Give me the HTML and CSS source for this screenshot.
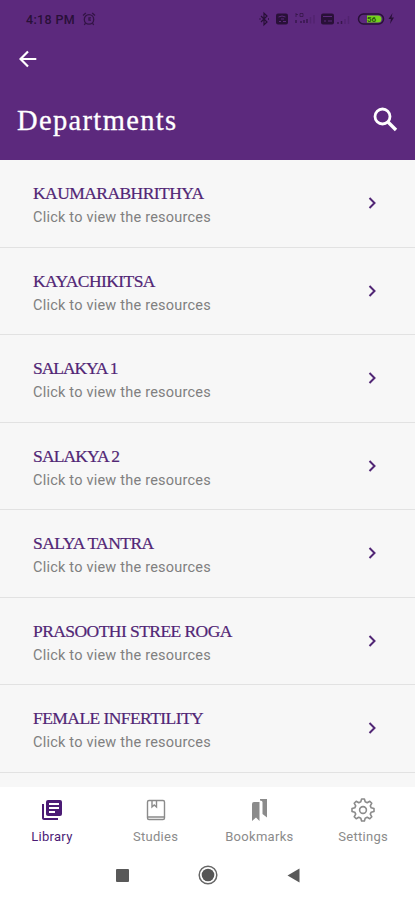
FILE: index.html
```html
<!DOCTYPE html>
<html lang="en">
<head>
<meta charset="utf-8">
<title>Departments</title>
<link rel="stylesheet" href="styles.css">
</head>
<body>
<header class="header">
  <div class="status">
    <span class="time">4:18 PM</span>
    <svg class="alarm" width="14" height="14" viewBox="0 0 14 14" fill="none" stroke="currentColor" stroke-width="1.3"><circle cx="7" cy="7.4" r="4.7"/><path d="M1 3.5 3.8 1M13 3.5 10.2 1M3.5 11.2 2.3 13M10.5 11.2 11.7 13M9 5.8H7v2.3h2"/></svg>
    <svg class="signals" width="136" height="16" viewBox="0 0 136 16" fill="none" stroke="currentColor">
      <path d="m2 5 6 6-3 2.8V2.2L8 5l-6 6" stroke-width="1.2"/><path d="M.5 8h1M9 8h1" stroke-width="1.4"/>
      <rect x="17" y="2.5" width="12" height="11" rx="2" fill="currentColor" stroke="none"/>
      <path d="M19.500 6q3.500-2 7 0M20 10.500h2M24 10.500h3M22 8h3" stroke="#5c297d" stroke-width="1"/>
      <path d="M37 2v4M37 3.500h2M41 2.500h3v3h-3z" stroke-width="1" opacity=".6"/><path d="M37 9v3M42 12v-2M45 12V9M48 12V8" stroke-width="1.500" opacity=".7"/>
      <path d="M51.500 12.500V6M55 12.500V4" stroke-width="1.500" opacity=".2"/>
      <rect x="62" y="2.500" width="13" height="11" rx="2" fill="currentColor" stroke="none"/>
      <path d="M64 5.500h9M65 10h2M69 10h4" stroke="#5c297d" stroke-width="1"/>
      <path d="M79 13v-2M82.500 13v-3" stroke-width="1.500" opacity=".7"/><path d="M86 13V8M89.500 13V5" stroke-width="1.500" opacity=".2"/>
      <rect x="99.500" y="3" width="25" height="10" rx="5" stroke-width="1.500"/>
      <path d="M108 4.500h11a3.500 3.500 0 0 1 0 7h-11z" fill="#75d31c" stroke="none"/>
      <text class="charge" x="108" y="11">56</text>
      <path d="m133.500 2-4 6h2.500l-1 5 4-6.500h-2.500z" fill="currentColor" stroke="none"/>
    </svg>
  </div>
  <div class="back"><svg width="18" height="18" viewBox="0 0 18 18" fill="none" stroke="#fff" stroke-width="2.200"><path d="M17.300 9H2M9 1.500 1.500 9 9 16.500"/></svg></div>
  <div class="heading">
    <h1>Departments</h1>
    <svg width="25" height="25" viewBox="0 0 25 25" fill="none" stroke="#fff" stroke-width="2.800"><circle cx="9.500" cy="9.500" r="7.500"/><path d="m15 15 8 8" stroke-width="3.400"/></svg>
  </div>
</header>
<main class="list">
  <div class="row"><div class="label"><h2>KAUMARABHRITHYA</h2><p>Click to view the resources</p></div><svg class="chev" viewBox="0 0 9 12"><path d="m1.500 1 5 5-5 5"/></svg></div>
  <div class="row"><div class="label"><h2>KAYACHIKITSA</h2><p>Click to view the resources</p></div><svg class="chev" viewBox="0 0 9 12"><path d="m1.500 1 5 5-5 5"/></svg></div>
  <div class="row"><div class="label"><h2 class="tight">SALAKYA 1</h2><p>Click to view the resources</p></div><svg class="chev" viewBox="0 0 9 12"><path d="m1.500 1 5 5-5 5"/></svg></div>
  <div class="row"><div class="label"><h2 class="snug">SALAKYA 2</h2><p>Click to view the resources</p></div><svg class="chev" viewBox="0 0 9 12"><path d="m1.500 1 5 5-5 5"/></svg></div>
  <div class="row"><div class="label"><h2>SALYA TANTRA</h2><p>Click to view the resources</p></div><svg class="chev" viewBox="0 0 9 12"><path d="m1.500 1 5 5-5 5"/></svg></div>
  <div class="row"><div class="label"><h2>PRASOOTHI STREE ROGA</h2><p>Click to view the resources</p></div><svg class="chev" viewBox="0 0 9 12"><path d="m1.500 1 5 5-5 5"/></svg></div>
  <div class="row"><div class="label"><h2>FEMALE INFERTILITY</h2><p>Click to view the resources</p></div><svg class="chev" viewBox="0 0 9 12"><path d="m1.500 1 5 5-5 5"/></svg></div>
</main>
<nav class="tabs">
  <a class="tab active"><svg width="24" height="24" viewBox="0 0 24 24"><path fill="currentColor" d="M4 6H2v14c0 1.100.9 2 2 2h14v-2H4zm16-4H8a2 2 0 0 0-2 2v12c0 1.100.9 2 2 2h12a2 2 0 0 0 2-2V4a2 2 0 0 0-2-2m-1 9H9V9h10zm-4 4H9v-2h6zm4-8H9V5h10z"/></svg><span>Library</span></a>
  <a class="tab"><svg width="24" height="24" viewBox="0 0 24 24" fill="none" stroke="currentColor" stroke-width="1.400"><rect x="3.500" y="2.500" width="17" height="19" rx="1.500"/><path d="M3.500 19h17M8 2.500V9l2.200-2 2.300 2V2.500"/></svg><span>Studies</span></a>
  <a class="tab"><svg width="24" height="24" viewBox="0 0 24 24" fill="currentColor"><path d="M5 6q0-2 2-2h5.500v19L9 19.500 5 23zM13 1h7v18.500L15.500 16V4q0-1.500-2.500-1.500z"/></svg><span>Bookmarks</span></a>
  <a class="tab"><svg width="24" height="24" viewBox="0 0 24 24" fill="none" stroke="currentColor" stroke-width="1.600" stroke-linejoin="round"><path d="M9.800 3.800 10.600 1h2.800l.8 2.800 2 .9 2.600-1.500 2 2-1.500 2.600.9 2 2.800.8v2.800l-2.800.8-.9 2 1.500 2.600-2 2-2.600-1.500-2 .9-.8 2.800h-2.800l-.8-2.800-2-.9-2.600 1.500-2-2 1.500-2.600-.9-2L1 13.400v-2.800l2.800-.8.9-2-1.500-2.600 2-2 2.600 1.500z"/><circle cx="12" cy="12" r="3.400"/></svg><span>Settings</span></a>
</nav>
<footer class="system">
  <svg width="13" height="13" viewBox="0 0 13 13"><rect width="13" height="13" rx="1" fill="#595959"/></svg>
  <svg width="20" height="20" viewBox="0 0 20 20"><circle cx="10" cy="10" r="8.800" fill="none" stroke="#666" stroke-width="1.500"/><circle cx="10" cy="10" r="6.300" fill="#555"/></svg>
  <svg width="13" height="15" viewBox="0 0 13 15"><path d="M12.500.5v14L.5 7.500z" fill="#595959"/></svg>
</footer>
</body>
</html>
```
FILE: styles.css
```css
* { box-sizing: border-box; }
body { margin: 0; width: 415px; height: 900px; overflow: hidden; background: #fff; font-family: Roboto, sans-serif; display: flex; flex-direction: column; }
h1, h2, p { margin: 0; font-weight: 400; }
svg { display: block; flex: none; }
.header { height: 159.500px; flex: none; background: #5c297d; color: #fff; }
.status { height: 38px; display: flex; align-items: center; padding: 0 20px 0 26px; color: #291038; }
.time { font-size: 12.500px; font-weight: 500; letter-spacing: .35px; }
.alarm { margin-left: 7px; opacity: .8; }
.signals { margin-left: auto; }
.charge { font: 700 8px Roboto, sans-serif; fill: #2b5512; stroke: none; }
.back { height: 43px; padding: 12px 0 0 19px; }
.heading { display: flex; justify-content: space-between; align-items: center; height: 78.500px; padding: 0 17px 0 17px; }
.heading svg { margin-top: -1px; }
h1 { font: 400 28.500px/36px "Liberation Serif", serif; letter-spacing: 1.350px; padding-top: 2px; -webkit-text-stroke: .3px #fff; }
.list { flex: none; height: 627.500px; padding-top: .5px; background: #f7f7f7; }
.row { height: 87.500px; display: flex; justify-content: space-between; align-items: center; padding: 0 38px 0 33px; border-bottom: 1px solid #e2e2e2; }
.label { padding-top: 4px; }
h2 { font: 400 17.500px/22px "Liberation Serif", serif; letter-spacing: -.56px; color: #512675; white-space: nowrap; -webkit-text-stroke: .2px #512675; }
.snug { letter-spacing: -.85px; }
.tight { letter-spacing: -1.050px; }
.row p { font-size: 14.500px; line-height: 20px; margin-top: 4px; color: #808080; letter-spacing: .22px; }
.chev { width: 9px; height: 12px; fill: none; stroke: #512675; stroke-width: 2; }
.tabs { height: 63px; flex: none; display: flex; padding: 0; }
.tab { flex: 1; display: flex; flex-direction: column; align-items: center; padding-top: 11px; color: #8b8b8b; font-size: 13px; letter-spacing: .3px; }
.tab span { line-height: 18px; margin-top: 6px; }
.active { color: #4b1b75; }
.system { height: 50px; flex: none; display: flex; justify-content: center; align-items: center; gap: 69px; }
```
